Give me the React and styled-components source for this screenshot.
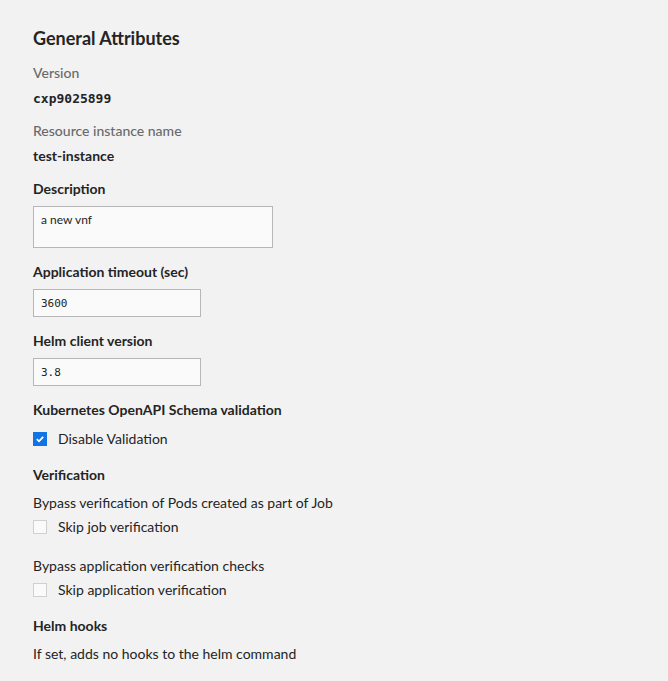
import React from 'react'
import styled, { createGlobalStyle } from 'styled-components';

const Global = createGlobalStyle`
  html, body {
    margin: 0;
    background: #f2f2f2;
  }
  body {
    font-family: Lato, "Noto Sans", sans-serif;
    color: #242424;
  }
`

const Page = styled.div`
  padding: 26px 33px 20px;
  display: flex;
  flex-direction: column;
`

const Title = styled.h2`
  margin: 0 0 13px;
  font-size: 18px;
  font-weight: 700;
  line-height: 24px;
`

const Field = styled.div`
  display: flex;
  flex-direction: column;
  margin-bottom: ${p => p.$gap || 16}px;
`

const Label = styled.div`
  font-size: 14px;
  line-height: 20px;
  font-weight: ${p => p.$muted ? 500 : 700};
  color: ${p => p.$muted ? '#6a6a6a' : '#242424'};
  margin-bottom: ${p => p.$space || 4}px;
`

const Value = styled.div`
  font-size: ${p => p.$mono ? 13 : 14}px;
  line-height: 20px;
  font-weight: 700;
  font-family: ${p => p.$mono ? '"DejaVu Sans Mono", monospace' : 'inherit'};
`

const Input = styled.div`
  box-sizing: border-box;
  width: ${p => p.$w}px;
  height: ${p => p.$h}px;
  border: 1px solid #b7b7b7;
  background: #fafafa;
  padding: ${p => p.$area ? '5px 7px' : '0 7px'};
  display: flex;
  align-items: ${p => p.$area ? 'flex-start' : 'center'};
  font-size: ${p => p.$area ? 12 : 11}px;
  font-family: ${p => p.$area ? 'inherit' : '"DejaVu Sans Mono", monospace'};
  color: #242424;
`

const Text = styled.div`
  font-size: 14px;
  line-height: 20px;
  margin-bottom: 4px;
`

const CheckRow = styled.label`
  display: flex;
  align-items: center;
  gap: 11px;
  font-size: 14px;
  line-height: 20px;
`

const Box = styled.span`
  box-sizing: border-box;
  width: 14px;
  height: 14px;
  display: inline-flex;
  align-items: center;
  justify-content: center;
  background: ${p => p.$on ? '#1174e6' : '#fafafa'};
  border: 1px solid ${p => p.$on ? '#1174e6' : '#d0d0d0'};
`

function Check({ on, children }) {
  return (
    <CheckRow>
      <Box $on={on}>
        {on && (
          <svg width="10" height="10" viewBox="0 0 10 10">
            <path d="M1.8 5.2 L4 7.3 L8.2 2.8" fill="none" stroke="#fff" strokeWidth="1.8" />
          </svg>
        )}
      </Box>
      {children}
    </CheckRow>
  )
}

function App() {
  return (
    <Page>
      <Global />
      <Title>General Attributes</Title>

      <Field $gap={12}>
        <Label $muted $space={6}>Version</Label>
        <Value $mono>cxp9025899</Value>
      </Field>

      <Field $gap={13}>
        <Label $muted $space={5}>Resource instance name</Label>
        <Value>test-instance</Value>
      </Field>

      <Field $gap={14}>
        <Label $space={7}>Description</Label>
        <Input $w={240} $h={42} $area>a new vnf</Input>
      </Field>

      <Field $gap={14}>
        <Label $space={7}>Application timeout (sec)</Label>
        <Input $w={168} $h={28}>3600</Input>
      </Field>

      <Field $gap={14}>
        <Label $space={7}>Helm client version</Label>
        <Input $w={168} $h={28}>3.8</Input>
      </Field>

      <Field $gap={16}>
        <Label $space={9}>Kubernetes OpenAPI Schema validation</Label>
        <Check on>Disable Validation</Check>
      </Field>

      <Field $gap={19}>
        <Label $space={8}>Verification</Label>
        <Text>Bypass verification of Pods created as part of Job</Text>
        <Check>Skip job verification</Check>
      </Field>

      <Field $gap={16}>
        <Text>Bypass application verification checks</Text>
        <Check>Skip application verification</Check>
      </Field>

      <Field>
        <Label $space={8}>Helm hooks</Label>
        <Text>If set, adds no hooks to the helm command</Text>
      </Field>
    </Page>
  )
}

export default App;
